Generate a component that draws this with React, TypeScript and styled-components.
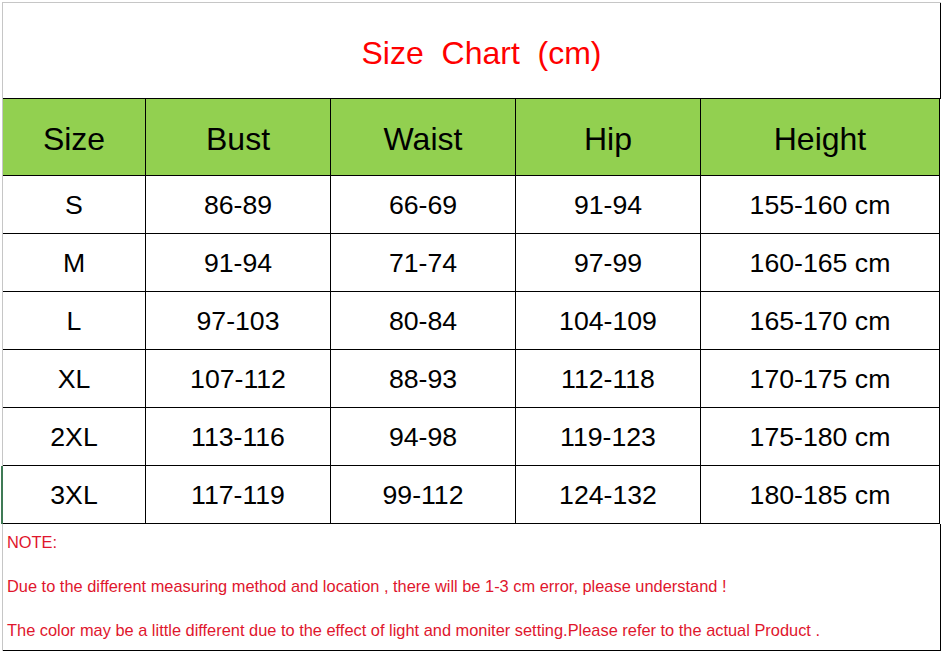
import React from "react";
import styled, { createGlobalStyle } from "styled-components";

const Global = createGlobalStyle`
  html, body { margin: 0; padding: 0; background: #ffffff; }
  body { font-family: "Liberation Sans", Arial, sans-serif; }
`;

const Page = styled.div`
  width: 941px;
  height: 652px;
  background: #ffffff;
  overflow: hidden;
  padding-top: 2px;
  box-sizing: border-box;
`;

const Sheet = styled.div`
  margin-left: 2px;
  width: 938px;
  border-top: 1px solid #c6c6c6;
  border-left: 1px solid #c6c6c6;
  display: flex;
  flex-direction: column;
`;

const TitleCell = styled.div`
  box-sizing: border-box;
  border-bottom: 1px solid #000;
  border-right: 1px solid #000;
  display: flex;
  align-items: center;
  justify-content: center;
  padding: 4px 0 0 20px;
  height: 96px;
`;

const Title = styled.h1`
  margin: 0;
  font-size: 32px;
  font-weight: 400;
  color: #ff0000;
  white-space: pre;
  line-height: 1;
`;

const Grid = styled.div`
  display: grid;
  grid-template-columns: 143px 185px 185px 185px 239px;
`;

const Cell = styled.div<{ $head?: boolean; $mark?: boolean }>`
  box-sizing: border-box;
  height: ${(p) => (p.$head ? "77px" : "58px")};
  border-right: 1px solid #000;
  border-bottom: 1px solid #000;
  background: ${(p) => (p.$head ? "#92d050" : "#ffffff")};
  color: #000;
  font-size: ${(p) => (p.$head ? "32px" : "26.67px")};
  display: flex;
  align-items: center;
  justify-content: center;
  padding-top: ${(p) => (p.$head ? "4px" : "2px")};
  box-shadow: ${(p) => (p.$mark ? "-2px 0 0 #3f7a55" : "none")};
  white-space: nowrap;
`;

const Notes = styled.div`
  height: 127px;
  box-sizing: border-box;
  border-right: 1px solid #000;
  border-bottom: 1px solid #000;
  padding: 8px 0 0 4px;
  display: flex;
  flex-direction: column;
  gap: 24px;
`;

const NoteLine = styled.p`
  margin: 0;
  font-size: 16.4px;
  line-height: 20px;
  color: #e0162d;
  white-space: nowrap;
`;

const headers = ["Size", "Bust", "Waist", "Hip", "Height"];
const rows = [
  ["S", "86-89", "66-69", "91-94", "155-160 cm"],
  ["M", "91-94", "71-74", "97-99", "160-165 cm"],
  ["L", "97-103", "80-84", "104-109", "165-170 cm"],
  ["XL", "107-112", "88-93", "112-118", "170-175 cm"],
  ["2XL", "113-116", "94-98", "119-123", "175-180 cm"],
  ["3XL", "117-119", "99-112", "124-132", "180-185 cm"],
];

export default function App() {
  return (
    <Page>
      <Global />
      <Sheet>
        <TitleCell>
          <Title>{"Size  Chart  (cm)"}</Title>
        </TitleCell>
        <Grid>
          {headers.map((h) => (
            <Cell key={h} $head>
              {h}
            </Cell>
          ))}
          {rows.map((r, ri) =>
            r.map((v, ci) => (
              <Cell key={`${ri}-${ci}`} $mark={ri === rows.length - 1 && ci === 0}>
                {v}
              </Cell>
            ))
          )}
        </Grid>
        <Notes>
          <NoteLine>NOTE:</NoteLine>
          <NoteLine>
            Due to the different measuring method and location , there will be 1-3 cm error, please understand !
          </NoteLine>
          <NoteLine>
            The color may be a little different due to the effect of light and moniter setting.Please refer to the actual Product .
          </NoteLine>
        </Notes>
      </Sheet>
    </Page>
  );
}
